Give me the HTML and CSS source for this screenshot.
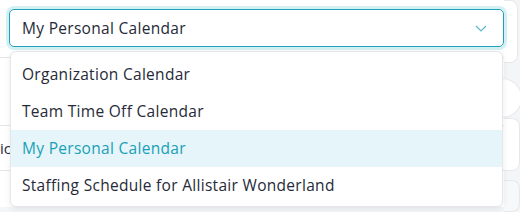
FILE: index.html
```html
<!DOCTYPE html>
<html lang="en">
<head>
    <meta charset="UTF-8">
    <title>Calendar Select</title>
    <link rel="stylesheet" href="styles.css">
</head>
<body>
    <div class="page">
        <div class="form">
            <div class="field">
                <div class="select">
                    <span class="select-value">My Personal Calendar</span>
                    <svg class="chevron" width="12" height="7" viewBox="0 0 12 7">
                        <path d="M1 1 L6 6 L11 1" fill="none" stroke="#5cb9d2" stroke-width="1.2"/>
                    </svg>
                </div>

                <ul class="menu">
                    <li class="menu-item">Organization Calendar</li>
                    <li class="menu-item">Team Time Off Calendar</li>
                    <li class="menu-item active">My Personal Calendar</li>
                    <li class="menu-item">Staffing Schedule for Allistair Wonderland</li>
                </ul>
            </div>

            <div class="row"></div>
            <div class="row tall"><span class="row-label">ic</span></div>
            <div class="row last"></div>
        </div>

        <div class="side">
            <div class="side-card top"></div>
            <div class="side-dot"></div>
            <div class="side-card mid"></div>
            <div class="side-card low"></div>
        </div>
    </div>
</body>
</html>
```

FILE: styles.css
```css
body {
    margin: 0;
    font-family: "Open Sans", Lato, sans-serif;
    background: #f4f5f7;
}

.page {
    display: flex;
    width: 520px;
    height: 212px;
    overflow: hidden;
}

.form {
    width: 504px;
    background: #fff;
    height: 207px;
}

.field {
    position: relative;
    padding: 9px 0 0 9px;
    height: 48px;
    border-bottom: 1px solid #e3e5e8;
}

.select {
    box-sizing: border-box;
    height: 38px;
    width: 495px;
    border: 1px solid #1ba2b8;
    border-radius: 5px;
    box-shadow: 0 0 0 3px #d6eff3;
    display: flex;
    align-items: center;
    justify-content: space-between;
    padding: 0 16px 0 12px;
    font-size: 15.5px;
    letter-spacing: 0.3px;
    color: #262a37;
}

.chevron {
    display: block;
}

.menu {
    position: absolute;
    top: 51px;
    left: 10px;
    width: 493px;
    margin: 0;
    padding: 4px 0;
    list-style: none;
    background: #fff;
    border: 1px solid #e4e6ea;
    border-radius: 6px;
    box-shadow: 0 2px 6px rgba(0, 0, 0, 0.08);
    box-sizing: border-box;
    height: 156px;
    z-index: 10;
}

.menu-item {
    height: 37px;
    line-height: 37px;
    padding: 0 11px;
    font-size: 15.5px;
    letter-spacing: 0.3px;
    color: #262a37;
}

.menu-item.active {
    background: #e6f5f9;
    color: #18a0b8;
}

.row {
    height: 67px;
    border-bottom: 1px solid #e3e5e8;
}

.row.tall {
    height: 44px;
    display: flex;
    align-items: center;
    font-size: 15px;
    color: #262a37;
}

.row.last {
    height: 36px;
    border-bottom: none;
}

.row-label {
    margin-left: 0;
}

.side {
    flex: 1;
    display: flex;
    flex-direction: column;
}

.side-card {
    background: #fff;
    border: 1px solid #e6e8eb;
    border-left: none;
    border-radius: 0 8px 8px 0;
}

.side-card.top {
    height: 62px;
    margin-right: 4px;
}

.side-dot {
    width: 38px;
    height: 38px;
    margin: 15px 0 0 -22px;
    border-radius: 50%;
    border: 1px solid #e6e8eb;
    background: #fff;
}

.side-card.mid {
    height: 52px;
    margin-right: 2px;
}

.side-card.low {
    height: 30px;
    margin-top: 9px;
    margin-right: 2px;
    background: #f7f8f9;
}
```
